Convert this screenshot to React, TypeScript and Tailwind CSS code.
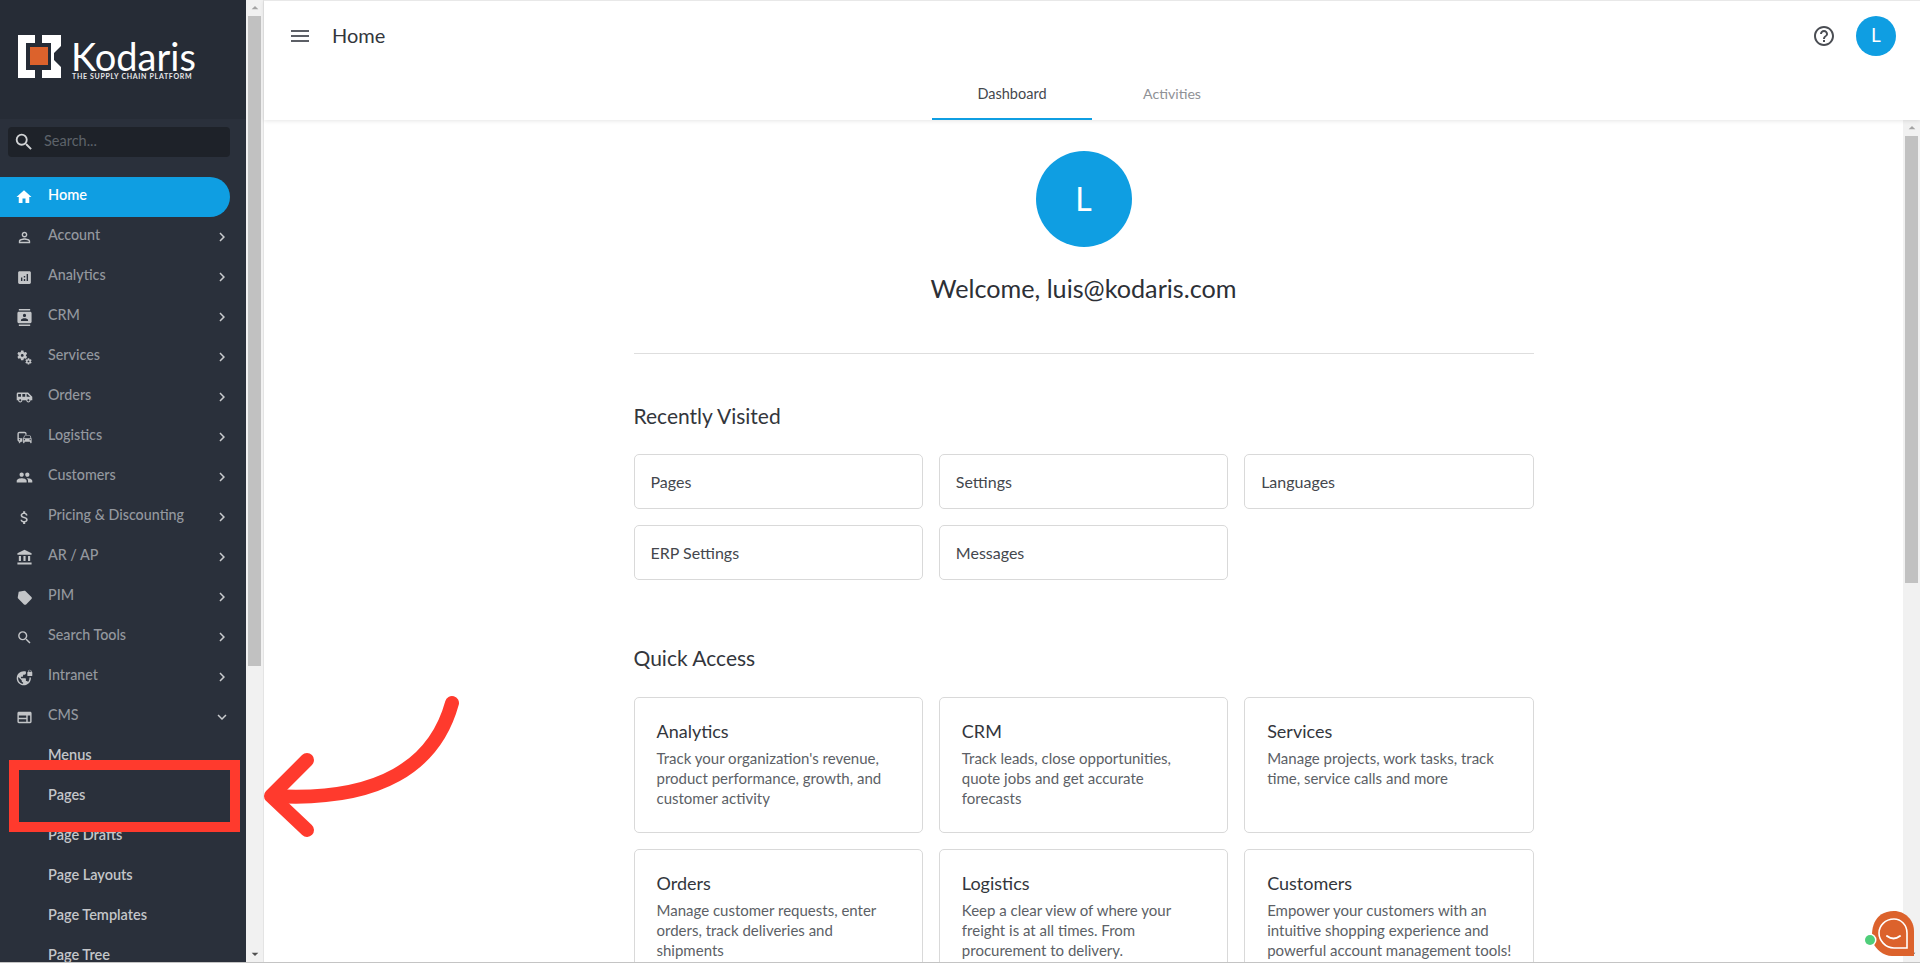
import {
  MdHome, MdOutlinePermIdentity, MdAnalytics, MdContacts, MdMiscellaneousServices, MdAirportShuttle,
  MdOutlineCommute, MdPeople, MdAttachMoney, MdAccountBalance, MdLabel, MdSearch, MdVpnLock, MdOutlineWeb,
  MdChevronRight, MdExpandMore, MdMenu, MdHelpOutline, MdArrowDropUp, MdArrowDropDown,
} from 'react-icons/md';

const navItems = [
  { label: 'Account', icon: <MdOutlinePermIdentity size={17} /> },
  { label: 'Analytics', icon: <MdAnalytics size={17} /> },
  { label: 'CRM', icon: <MdContacts size={17} /> },
  { label: 'Services', icon: <MdMiscellaneousServices size={17} /> },
  { label: 'Orders', icon: <MdAirportShuttle size={17} /> },
  { label: 'Logistics', icon: <MdOutlineCommute size={17} /> },
  { label: 'Customers', icon: <MdPeople size={17} /> },
  { label: 'Pricing & Discounting', icon: <MdAttachMoney size={17} /> },
  { label: 'AR / AP', icon: <MdAccountBalance size={17} /> },
  { label: 'PIM', icon: <MdLabel size={18} className="rotate-[-135deg]" /> },
  { label: 'Search Tools', icon: <MdSearch size={17} /> },
  { label: 'Intranet', icon: <MdVpnLock size={17} /> },
];

const cmsItems = ['Menus', 'Pages', 'Page Drafts', 'Page Layouts', 'Page Templates', 'Page Tree'];
const recent = ['Pages', 'Settings', 'Languages', 'ERP Settings', 'Messages'];

const quickAccess = [
  { title: 'Analytics', text: "Track your organization's revenue, product performance, growth, and customer activity" },
  { title: 'CRM', text: 'Track leads, close opportunities, quote jobs and get accurate\nforecasts' },
  { title: 'Services', text: 'Manage projects, work tasks, track time, service calls and more' },
  { title: 'Orders', text: 'Manage customer requests, enter orders, track deliveries and shipments' },
  { title: 'Logistics', text: 'Keep a clear view of where your freight is at all times. From procurement to delivery.' },
  { title: 'Customers', text: 'Empower your customers with an intuitive shopping experience and powerful account management tools!' },
];

function Logo() {
  return (
    <div className="flex items-start gap-[10px]">
      <svg width="43" height="43" viewBox="0 0 43 43" className="shrink-0">
        <path fill="#fff" d="M0 0h17v8H8v27h9v8H0z" />
        <path fill="#fff" d="M24 0H43V11L36 18V25L43 32V43H24V35H33V8H24z" />
        <rect x="12" y="12" width="18" height="18" fill="#dc622c" />
      </svg>
      <div className="flex flex-col items-start">
        <span className="text-[38px] leading-[34px] mt-[4px] text-white font-normal">Kodaris</span>
        <span className="text-[7px] leading-[8px] mt-[-1px] ml-[1px] text-[#e6e7e8] font-bold tracking-[0.68px] whitespace-nowrap">THE SUPPLY CHAIN PLATFORM</span>
      </div>
    </div>
  );
}

function Sidebar() {
  return (
    <aside className="w-[246px] shrink-0 h-full overflow-hidden bg-[#2a303b] flex flex-col">
      <div className="h-[119px] shrink-0 bg-[#262c36] pl-[18px] pt-[35px]">
        <Logo />
      </div>
      <div className="ml-[8px] mr-[16px] mt-[8px] h-[30px] rounded-[4px] bg-[#1e2229] flex items-center shrink-0">
        <MdSearch className="ml-[5px] text-[#d2d4d6]" size={22} />
        <span className="ml-[9px] pb-[2px] text-[14.5px] text-[#5d626a]">Search...</span>
      </div>
      <div className="mt-[20px] mr-[16px] h-[40px] shrink-0 bg-[#0f9ee2] rounded-r-[20px] flex items-center text-white">
        <span className="w-[48px] flex justify-center"><MdHome size={18} /></span>
        <span className="pb-[4px] text-[14.5px] font-semibold">Home</span>
      </div>
      {navItems.map(({ label, icon }) => (
        <div key={label} className="h-[40px] shrink-0 flex items-center text-[#94989f]">
          <span className="w-[48px] flex justify-center text-[#c3c5c8]">{icon}</span>
          <span className="pb-[4px] text-[14.3px] font-medium flex-1">{label}</span>
          <MdChevronRight className="mr-[15px] text-[#c9cbce]" size={18} />
        </div>
      ))}
      <div className="h-[40px] shrink-0 flex items-center text-[#94989f]">
        <span className="w-[48px] flex justify-center text-[#c3c5c8]"><MdOutlineWeb size={17} /></span>
        <span className="pb-[4px] text-[14.3px] font-medium flex-1">CMS</span>
        <MdExpandMore className="mr-[15px] text-[#c9cbce]" size={18} />
      </div>
      {cmsItems.map((item) => (
        <div key={item} className="h-[40px] shrink-0 flex items-center pl-[48px] pb-[4px] text-[14.5px] font-semibold text-[#c4c6c9]">
          {item}
        </div>
      ))}
    </aside>
  );
}

function Scrollbar({ thumbClass }: { thumbClass: string }) {
  return (
    <div className="w-[17px] shrink-0 h-full bg-[#f1f1f1] flex flex-col items-center">
      <MdArrowDropUp className="h-[16px] shrink-0 text-[#a3a3a3]" size={16} />
      <div className={`w-[13px] bg-[#c1c1c1] ${thumbClass}`} />
      <div className="flex-1" />
      <MdArrowDropDown className="h-[16px] shrink-0 text-[#505050]" size={16} />
    </div>
  );
}

function Header() {
  return (
    <header className="h-[120px] shrink-0 bg-white border-t border-[#e8e8e8] shadow-[0_1px_4px_rgba(0,0,0,0.1)] relative z-10 flex flex-col">
      <div className="h-[69px] flex items-center pl-[24px] pr-[24px] text-[#33363c]">
        <MdMenu className="text-[#5c5f66]" size={24} />
        <span className="ml-[20px] pb-[2px] text-[20px] flex-1">Home</span>
        <MdHelpOutline className="text-[#4a4d53] mr-[20px]" size={24} />
        <div className="w-[40px] h-[40px] rounded-full bg-[#0f9ee2] text-white flex items-center justify-center text-[19px]">L</div>
      </div>
      <div className="flex justify-center">
        <div className="w-[160px] h-[50px] border-b-2 border-[#0f9ee2] flex items-center justify-center text-[14.5px] text-[#44474d]">Dashboard</div>
        <div className="w-[160px] h-[50px] pb-[2px] flex items-center justify-center text-[14.2px] text-[#8f9196]">Activities</div>
      </div>
    </header>
  );
}

function Dashboard() {
  return (
    <div className="flex-1 h-full overflow-hidden flex flex-col items-center">
      <div className="w-[900px] shrink-0">
        <div className="flex flex-col items-center pt-[31px]">
          <div className="w-[96px] h-[96px] rounded-full bg-[#0f9ee2] text-white flex items-center justify-center text-[32px]">L</div>
          <div className="mt-[24px] text-[25.2px] leading-[34px] text-[#2d3036]">Welcome, luis@kodaris.com</div>
        </div>
        <div className="mt-[48px] h-[1px] bg-[#dedede]" />
        <h2 className="mt-[48px] text-[21px] leading-[28px] font-normal text-[#33363c]">Recently Visited</h2>
        <div className="mt-[24px] grid grid-cols-3 gap-x-[16px] gap-y-[16px]">
          {recent.map((r) => (
            <div key={r} className="h-[55px] border border-[#d9d9d9] rounded-[5px] flex items-center pl-[16px] text-[16px] text-[#44474d]">{r}</div>
          ))}
        </div>
        <h2 className="mt-[64px] text-[21px] leading-[28px] font-normal text-[#33363c]">Quick Access</h2>
        <div className="mt-[25px] grid grid-cols-3 gap-x-[16px] gap-y-[16px]">
          {quickAccess.map((c) => (
            <div key={c.title} className="h-[136px] border border-[#d9d9d9] rounded-[5px] pl-[22px] pr-[20px] pt-[20px]">
              <div className="text-[18px] leading-[26px] text-[#33363c]">{c.title}</div>
              <div className="mt-[5px] text-[15px] leading-[19.8px] text-[#5c5f66] whitespace-pre-line">{c.text}</div>
            </div>
          ))}
        </div>
      </div>
    </div>
  );
}

function ChatWidget() {
  return (
    <div className="absolute right-[5px] bottom-[5px] w-[52px] h-[47px]">
      <svg width="52" height="47" viewBox="0 0 52 47">
        <path fill="#dc622c" d="M31 1c11 0 20 9 20 20v25H29C20 46 13 39 10 33c-3-12 0-32 21-32z" />
        <path fill="none" stroke="#fff" strokeWidth="1.6" d="M31 9c-9 0-15 7-15 14s6 15 15 15h13V23c0-8-6-14-13-14z" />
        <path fill="none" stroke="#fff" strokeWidth="2" strokeLinecap="round" d="M24 26c4 3 9 3 13 0" />
        <circle cx="7" cy="30" r="6.5" fill="#fff" />
        <circle cx="7" cy="30" r="5" fill="#4fce7a" />
      </svg>
    </div>
  );
}

export default function App() {
  return (
    <div className="relative w-[1920px] h-[963px] overflow-hidden flex bg-white border-b border-[#c4c4c4] font-['Lato','Open_Sans',sans-serif]">
      <Sidebar />
      <Scrollbar thumbClass="h-[650px]" />
      <main className="flex-1 min-w-0 h-full flex flex-col border-l border-[#e4e4e4]">
        <Header />
        <div className="flex-1 min-h-0 flex">
          <Dashboard />
          <Scrollbar thumbClass="h-[447px]" />
        </div>
      </main>

      {/* annotation over the page */}
      <div className="absolute left-[9px] top-[760px] w-[231px] h-[72px] border-[10px] border-[#ff3a2d]" />
      <svg className="absolute left-[260px] top-[690px]" width="200" height="160" viewBox="0 0 200 160">
        <path d="M192 13C175 75 120 112 14 106" fill="none" stroke="#ff3a2d" strokeWidth="14" strokeLinecap="round" />
        <path d="M47 70L11 106L47 140" fill="none" stroke="#ff3a2d" strokeWidth="14" strokeLinecap="round" strokeLinejoin="round" />
      </svg>
      <ChatWidget />
    </div>
  );
}
